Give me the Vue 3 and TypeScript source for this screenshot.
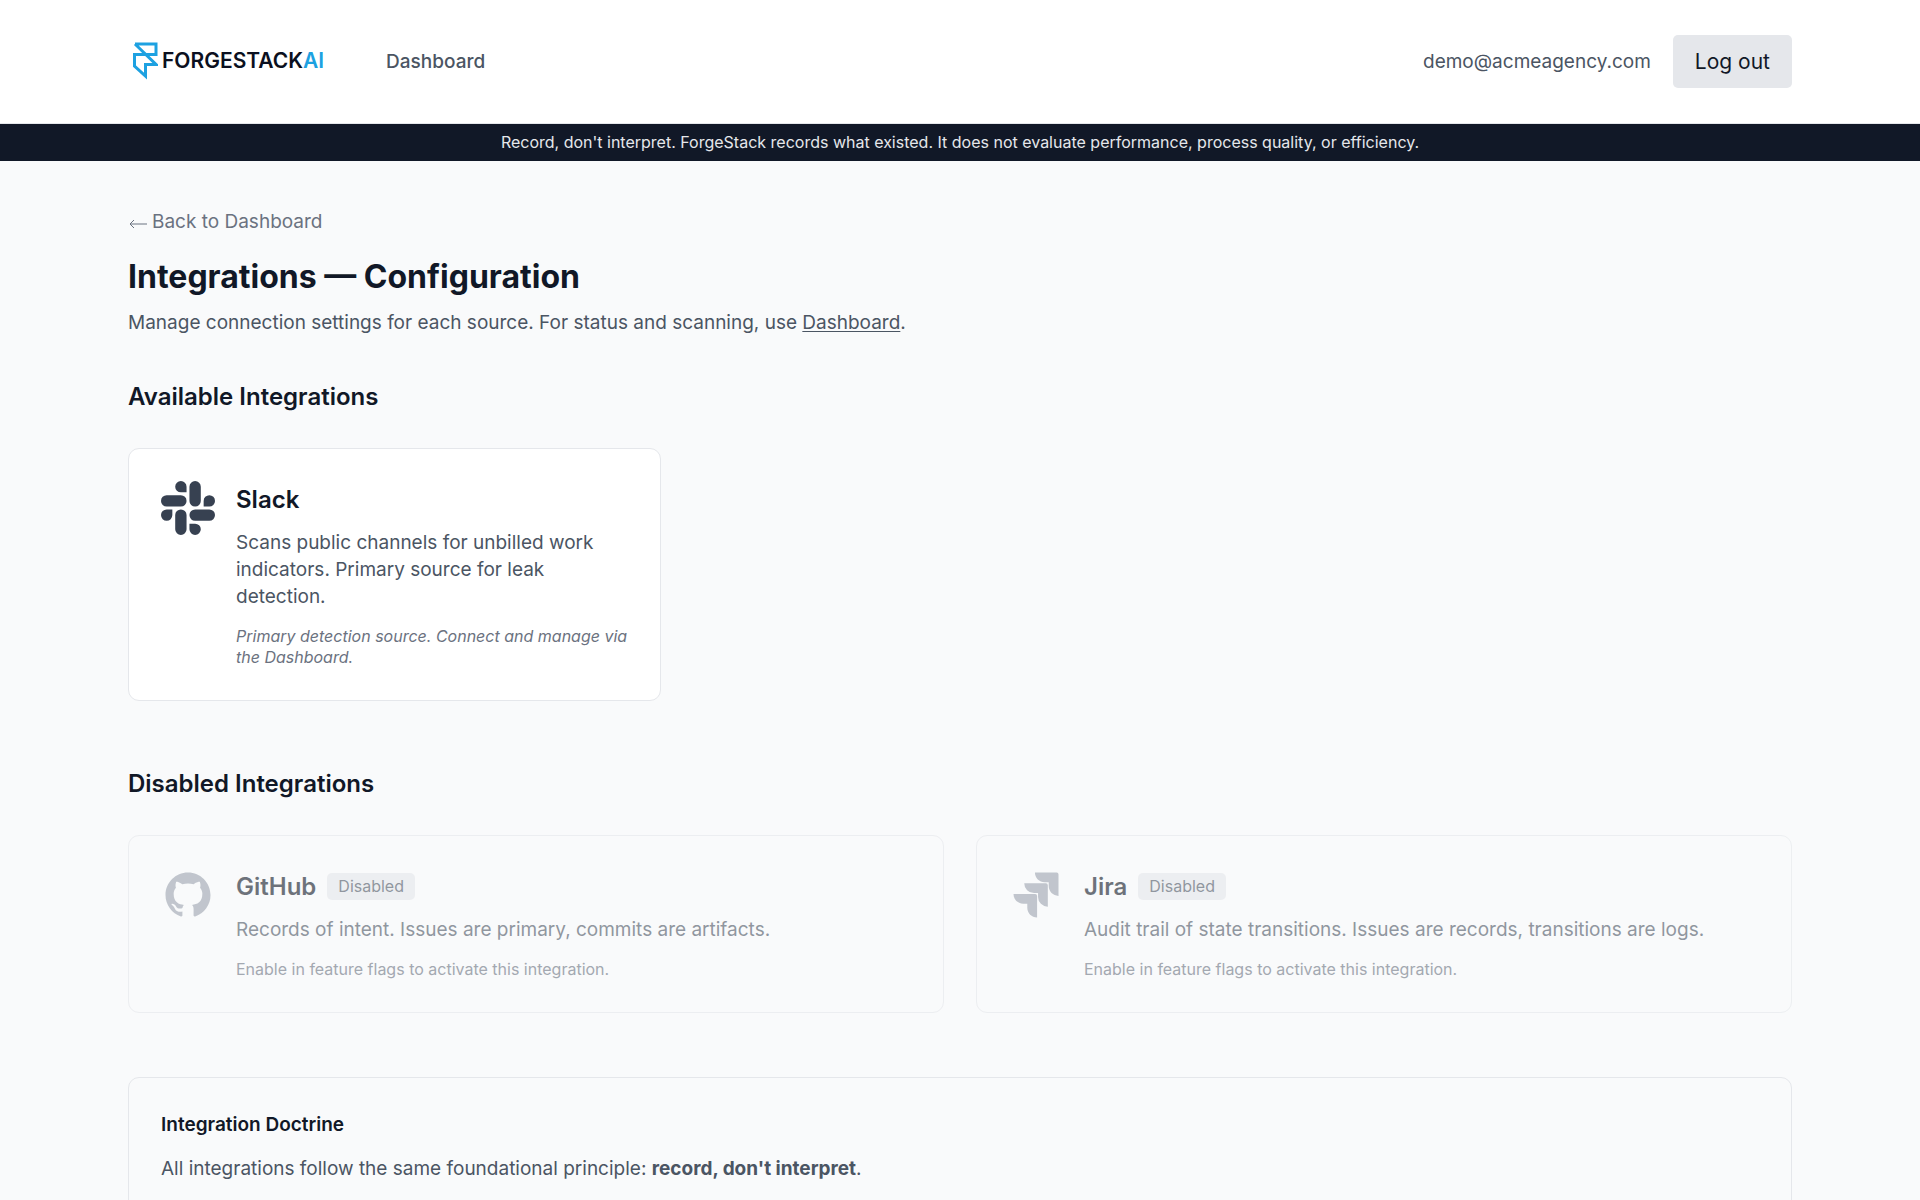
<script setup lang="ts">
interface Integration {
  name: string
  description: string
  icon: string
}

const banner: string =
  "Record, don't interpret. ForgeStack records what existed. It does not evaluate performance, process quality, or efficiency."

const disabledIntegrations: Integration[] = [
  {
    name: 'GitHub',
    description: 'Records of intent. Issues are primary, commits are artifacts.',
    icon: 'M12 2C6.477 2 2 6.484 2 12.017c0 4.425 2.865 8.18 6.839 9.504.5.092.682-.217.682-.483 0-.237-.008-.868-.013-1.703-2.782.605-3.369-1.343-3.369-1.343-.454-1.158-1.11-1.466-1.11-1.466-.908-.62.069-.608.069-.608 1.003.07 1.531 1.032 1.531 1.032.892 1.53 2.341 1.088 2.91.832.092-.647.35-1.088.636-1.338-2.22-.253-4.555-1.113-4.555-4.951 0-1.093.39-1.988 1.029-2.688-.103-.253-.446-1.272.098-2.65 0 0 .84-.27 2.75 1.026A9.564 9.564 0 0112 6.844c.85.004 1.705.115 2.504.337 1.909-1.296 2.747-1.027 2.747-1.027.546 1.379.202 2.398.1 2.651.64.7 1.028 1.595 1.028 2.688 0 3.848-2.339 4.695-4.566 4.943.359.309.678.92.678 1.855 0 1.338-.012 2.419-.012 2.747 0 .268.18.58.688.482A10.019 10.019 0 0022 12.017C22 6.484 17.522 2 12 2z',
  },
  {
    name: 'Jira',
    description: 'Audit trail of state transitions. Issues are records, transitions are logs.',
    icon: 'M11.53 2c0 2.4 1.97 4.35 4.35 4.35h1.78v1.7c0 2.4 1.94 4.34 4.34 4.35V2.84a.84.84 0 0 0-.84-.84h-9.63zM6.77 6.8a4.362 4.362 0 0 0 4.34 4.34h1.8v1.72a4.362 4.362 0 0 0 4.34 4.34V7.63a.841.841 0 0 0-.83-.83H6.77zM2 11.6c0 2.4 1.95 4.34 4.35 4.34h1.78v1.72c.01 2.39 1.95 4.34 4.35 4.34v-9.57a.84.84 0 0 0-.84-.84L2 11.6z',
  },
]
</script>

<template>
  <div class="page">
    <header class="header">
      <div class="container header-row">
        <nav class="nav">
          <a class="logo" href="#" aria-label="ForgeStack AI">
            <svg class="logo-mark" viewBox="0 0 26 38" aria-hidden="true">
              <path d="M3 2H24V12.500H13M3 2L24 22.500H13.500V34L2.500 24V12.500H13" />
            </svg>
            <span class="logo-text">FORGESTACK<span class="logo-accent">AI</span></span>
          </a>
          <a class="nav-link" href="#">Dashboard</a>
        </nav>
        <div class="account">
          <span class="email">demo@acmeagency.com</span>
          <button class="logout" type="button">Log out</button>
        </div>
      </div>
    </header>

    <div class="banner">{{ banner }}</div>

    <main class="container main">
      <a class="back" href="#">
        <svg class="arrow" viewBox="0 0 20 16" aria-hidden="true">
          <path d="M19 10H2M6 6L2 10L6 14" />
        </svg>
        Back to Dashboard
      </a>
      <h1>Integrations — Configuration</h1>
      <p class="intro">
        Manage connection settings for each source. For status and scanning, use
        <a href="#">Dashboard</a>.
      </p>

      <section class="section">
        <h2>Available Integrations</h2>
        <div class="grid available">
          <article class="card active">
            <svg class="icon" viewBox="0 0 24 24" aria-hidden="true">
              <path d="M5.042 15.165a2.528 2.528 0 0 1-2.52 2.523A2.528 2.528 0 0 1 0 15.165a2.527 2.527 0 0 1 2.522-2.52h2.52v2.52zM6.313 15.165a2.527 2.527 0 0 1 2.521-2.52 2.527 2.527 0 0 1 2.521 2.52v6.313A2.528 2.528 0 0 1 8.834 24a2.528 2.528 0 0 1-2.521-2.522v-6.313zM8.834 5.042a2.528 2.528 0 0 1-2.521-2.52A2.528 2.528 0 0 1 8.834 0a2.528 2.528 0 0 1 2.521 2.522v2.52H8.834zM8.834 6.313a2.528 2.528 0 0 1 2.521 2.521 2.528 2.528 0 0 1-2.521 2.521H2.522A2.528 2.528 0 0 1 0 8.834a2.528 2.528 0 0 1 2.522-2.521h6.312zM18.956 8.834a2.528 2.528 0 0 1 2.522-2.521A2.528 2.528 0 0 1 24 8.834a2.528 2.528 0 0 1-2.522 2.521h-2.522V8.834zM17.688 8.834a2.528 2.528 0 0 1-2.523 2.521 2.527 2.527 0 0 1-2.52-2.521V2.522A2.527 2.527 0 0 1 15.165 0a2.528 2.528 0 0 1 2.523 2.522v6.312zM15.165 18.956a2.528 2.528 0 0 1 2.523 2.522A2.528 2.528 0 0 1 15.165 24a2.527 2.527 0 0 1-2.52-2.522v-2.522h2.52zM15.165 17.688a2.527 2.527 0 0 1-2.52-2.523 2.526 2.526 0 0 1 2.52-2.52h6.313A2.527 2.527 0 0 1 24 15.165a2.528 2.528 0 0 1-2.522 2.523h-6.313z" />
            </svg>
            <div class="body">
              <div class="title-row"><h3>Slack</h3></div>
              <p class="description">
                Scans public channels for unbilled work indicators. Primary source for leak detection.
              </p>
              <p class="note emphasis">Primary detection source. Connect and manage via the Dashboard.</p>
            </div>
          </article>
        </div>
      </section>

      <section class="section">
        <h2>Disabled Integrations</h2>
        <div class="grid disabled">
          <article v-for="item in disabledIntegrations" :key="item.name" class="card inactive">
            <svg class="icon" viewBox="0 0 24 24" aria-hidden="true">
              <path :d="item.icon" />
            </svg>
            <div class="body">
              <div class="title-row">
                <h3>{{ item.name }}</h3>
                <span class="badge">Disabled</span>
              </div>
              <p class="description">{{ item.description }}</p>
              <p class="note">Enable in feature flags to activate this integration.</p>
            </div>
          </article>
        </div>
      </section>

      <section class="doctrine">
        <h3>Integration Doctrine</h3>
        <p>All integrations follow the same foundational principle: <strong>record, don't interpret</strong>.</p>
      </section>
    </main>
  </div>
</template>

<style>
body {
  margin: 0;
  background: #f9fafb;
}
</style>

<style scoped>
.page {
  min-height: 100vh;
  background: #f9fafb;
  color: #111827;
  font-family: Inter, 'Liberation Sans', sans-serif;
  font-size: 19px;
  line-height: 27px;
}

h1,
h2,
h3,
p {
  margin: 0;
}

.container {
  box-sizing: border-box;
  max-width: 1728px;
  margin: 0 auto;
  padding: 0 32px;
}

.header {
  background: #fff;
  border-bottom: 1px solid #e5e7eb;
}

.header-row {
  display: flex;
  align-items: center;
  justify-content: space-between;
  min-height: 123px;
}

.nav,
.account {
  display: flex;
  align-items: center;
}

.nav {
  gap: 62px;
}

.account {
  gap: 22px;
}

.logo {
  display: flex;
  align-items: center;
  padding: 0 0 2px 4px;
  color: #0b1020;
  text-decoration: none;
}

.logo-mark {
  width: 26px;
  height: 38px;
  fill: none;
  stroke: #1da1e1;
  stroke-width: 3;
}

.logo-text {
  padding-left: 4px;
  font-size: 21px;
  font-weight: 600;
  line-height: 24px;
}

.logo-accent {
  color: #1da1e1;
}

.nav-link {
  color: #4b5563;
  font-weight: 500;
  text-decoration: none;
}

.email {
  color: #4b5563;
}

.logout {
  padding: 11px 22px;
  border: 0;
  border-radius: 5px;
  background: #e5e7eb;
  color: #111827;
  font-family: inherit;
  font-size: 21px;
  line-height: 31px;
}

.banner {
  padding: 8px 32px;
  background: #111827;
  color: #e5e7eb;
  font-size: 16px;
  line-height: 21px;
  text-align: center;
}

.main {
  padding-top: 47px;
  padding-bottom: 48px;
}

.back {
  display: flex;
  align-items: center;
  gap: 4px;
  width: fit-content;
  color: #6b7280;
  text-decoration: none;
}

.arrow {
  width: 20px;
  height: 16px;
  fill: none;
  stroke: currentColor;
  stroke-width: 1;
}

h1 {
  margin-top: 21px;
  font-size: 32px;
  font-weight: 700;
  line-height: 42px;
}

.intro {
  margin-top: 11px;
  color: #4b5563;
}

.intro a {
  color: inherit;
  text-underline-offset: 2px;
}

.section {
  margin-top: 42px;
}

.section + .section {
  margin-top: 64px;
}

h2 {
  font-size: 24px;
  font-weight: 600;
  line-height: 37px;
}

.grid {
  display: grid;
  gap: 32px;
  margin-top: 33px;
}

.available {
  grid-template-columns: repeat(3, 1fr);
}

.disabled {
  grid-template-columns: repeat(2, 1fr);
}

.card {
  display: flex;
  align-items: flex-start;
  gap: 21px;
  padding: 32px;
  border: 1px solid #e5e7eb;
  border-radius: 11px;
}

.active {
  background: #fff;
}

.inactive {
  opacity: 0.6;
}

.icon {
  flex: none;
  width: 54px;
  height: 54px;
  fill: #374151;
}

.inactive .icon {
  fill: #9ca3af;
}

.body {
  flex: 1;
  min-width: 0;
}

.title-row {
  display: flex;
  align-items: center;
  gap: 11px;
}

.title-row h3 {
  font-size: 24px;
  font-weight: 600;
  line-height: 37px;
}

.badge {
  padding: 3px 11px;
  border-radius: 5px;
  background: #e5e7eb;
  color: #4b5563;
  font-size: 16px;
  line-height: 21px;
}

.description {
  margin-top: 11px;
  color: #4b5563;
}

.note {
  margin-top: 16px;
  color: #6b7280;
  font-size: 16px;
  line-height: 21px;
}

.emphasis {
  font-style: italic;
}

.doctrine {
  margin-top: 64px;
  padding: 32px;
  border: 1px solid #e5e7eb;
  border-radius: 11px;
}

.doctrine h3 {
  font-size: 19px;
  font-weight: 600;
  line-height: 29px;
}

.doctrine p {
  margin-top: 16px;
  color: #4b5563;
}
</style>
